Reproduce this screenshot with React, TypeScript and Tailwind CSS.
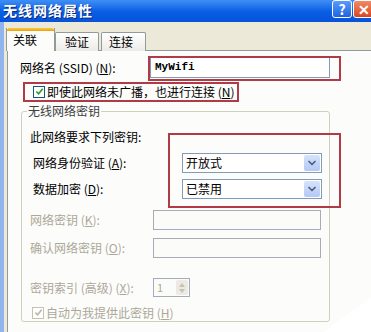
import { ChevronDown } from 'lucide-react'

function Dropdown({ value }: { value: string }) {
  return (
    <div className="flex h-[20px] w-[140px] items-center border border-[#7f9db9] bg-white pl-[3px]">
      <span className="flex-1 text-[12px] leading-none">{value}</span>
      <div className="mr-[1px] flex h-[16px] w-[16px] items-center justify-center rounded-[2px] bg-gradient-to-b from-[#d6e3fb] to-[#b3c8f5]">
        <ChevronDown className="h-[12px] w-[12px] text-[#4d6185]" strokeWidth={3.5} />
      </div>
    </div>
  )
}

function CheckMark({ disabled }: { disabled?: boolean }) {
  return (
    <div
      className={
        disabled
          ? 'flex h-[12px] w-[12px] items-center justify-center border border-[#c4c2b4] bg-white'
          : 'flex h-[12px] w-[12px] items-center justify-center border border-[#1c5180] bg-white'
      }
    >
      <svg viewBox="0 0 10 10" className="h-[9px] w-[9px]">
        <path
          d="M1.5 5 L4 7.5 L8.5 2"
          fill="none"
          stroke={disabled ? '#b8b6a8' : '#21a121'}
          strokeWidth="1.8"
        />
      </svg>
    </div>
  )
}

export default function App() {
  return (
    <div className="relative h-[332px] w-[371px] overflow-hidden bg-[#ece9d8] font-['Noto_Sans_CJK_SC','Noto_Sans',sans-serif] text-[12px] text-black">
      {/* Title bar */}
      <div className="flex h-[22px] items-start justify-between bg-gradient-to-b from-[#3f8ff6] via-[#0a5fe4] to-[#0752d8] pl-[3px]">
        <span className="mt-[2px] text-[14px] font-bold leading-[17px] tracking-[1px] text-white [text-shadow:1px_1px_0_#0a2a80]">
          无线网络属性
        </span>
        <div className="-mr-[3px] flex gap-[1px]">
          <div className="flex h-[18px] w-[20px] items-center justify-center rounded-[3px] border border-white bg-gradient-to-b from-[#5a9bff] to-[#1d62e0] text-[14px] font-bold leading-none text-white">
            ?
          </div>
          <div className="flex h-[18px] w-[21px] items-center justify-center rounded-[3px] border border-white bg-gradient-to-b from-[#f08a66] to-[#d9431c] text-[14px] font-bold leading-none text-white">
            ✕
          </div>
        </div>
      </div>

      <div className="flex h-[310px]">
        {/* window frame */}
        <div className="w-[4px] bg-[#8fb4ee]" />

        <div className="flex-1 pt-[6px]">
          {/* Tabs */}
          <div className="relative z-10 -mb-px flex items-start pl-[2px]">
            <div className="flex h-[23px] w-[49px] flex-col border-x border-[#919b9c] bg-[#fcfcfb]">
              <div className="h-[3px] rounded-t-[2px] bg-gradient-to-b from-[#ffc83c] to-[#e6a20d]" />
              <span className="pl-[6px] pt-[2px] leading-[14px]">关联</span>
            </div>
            <div className="mt-[4px] flex h-[19px] w-[44px] items-center rounded-t-[2px] border border-b-0 border-[#919b9c] bg-gradient-to-b from-white to-[#ecebe6] pl-[9px]">
              验证
            </div>
            <div className="ml-[2px] mt-[4px] flex h-[19px] w-[45px] items-center rounded-t-[2px] border border-b-0 border-[#919b9c] bg-gradient-to-b from-white to-[#ecebe6] pl-[7px]">
              连接
            </div>
          </div>

          {/* Tab panel */}
          <div className="-mr-[10px] ml-[3px] h-[300px] border border-[#919b9c] bg-[#fcfcfb]">
            <div className="mt-[6px] flex h-[21px] items-center">
              <span className="w-[142px] pl-[12px]">
                网络名 (SSID) (<u>N</u>):
              </span>
              <div className="flex h-[21px] w-[180px] items-center border border-[#7f9db9] bg-white pl-[4px] font-['Liberation_Mono',monospace] text-[11px] font-bold">
                MyWifi
              </div>
            </div>

            <div className="mt-[7px] flex h-[13px] items-center gap-[2px] pl-[25px]">
              <CheckMark />
              <span className="leading-none">
                即使此网络未广播，也进行连接 (<u>N</u>)
              </span>
            </div>

            <fieldset className="ml-[13px] mt-[6px] h-[218px] w-[309px] rounded-[3px] border border-[#d0d0bf]">
              <legend className="ml-[5px] px-[1px] leading-[14px] text-[#404040]">无线网络密钥</legend>
              <div className="flex flex-col">
                <span className="mt-[12px] pl-[8px] leading-[14px]">此网络要求下列密钥:</span>

                <div className="mt-[9px] flex items-center">
                  <span className="w-[160px] pl-[11px]">
                    网络身份验证 (<u>A</u>):
                  </span>
                  <Dropdown value="开放式" />
                </div>
                <div className="mt-[6px] flex items-center">
                  <span className="w-[160px] pl-[11px]">
                    数据加密 (<u>D</u>):
                  </span>
                  <Dropdown value="已禁用" />
                </div>

                <div className="mt-[11px] flex items-center text-[#aca899]">
                  <span className="w-[131px] pl-[8px]">
                    网络密钥 (<u>K</u>):
                  </span>
                  <div className="h-[20px] w-[168px] border border-[#a5acb5] bg-[#fbfbf9]" />
                </div>
                <div className="mt-[8px] flex items-center text-[#aca899]">
                  <span className="w-[131px] pl-[8px]">
                    确认网络密钥 (<u>O</u>):
                  </span>
                  <div className="h-[20px] w-[168px] border border-[#a5acb5] bg-[#fbfbf9]" />
                </div>

                <div className="mt-[20px] flex items-center text-[#aca899]">
                  <span className="w-[131px] pl-[8px]">
                    密钥索引 (高级) (<u>X</u>):
                  </span>
                  <div className="flex h-[19px] w-[37px] items-center border border-[#a5acb5] bg-[#fbfbf9] pl-[3px] text-[11px]">
                    <span className="flex-1 leading-none">1</span>
                    <div className="mr-[1px] flex h-[15px] w-[12px] flex-col items-center justify-center gap-[2px] rounded-[2px] bg-[#eceae2]">
                      <svg viewBox="0 0 6 4" className="h-[4px] w-[6px]">
                        <polygon points="0,4 3,0 6,4" fill="#c4c2b4" />
                      </svg>
                      <svg viewBox="0 0 6 4" className="h-[4px] w-[6px]">
                        <polygon points="0,0 6,0 3,4" fill="#c4c2b4" />
                      </svg>
                    </div>
                  </div>
                </div>

                <div className="mt-[9px] flex h-[13px] items-center gap-[2px] pl-[10px] text-[#aca899]">
                  <CheckMark disabled />
                  <span className="leading-none">
                    自动为我提供此密钥 (<u>H</u>)
                  </span>
                </div>
              </div>
            </fieldset>
          </div>
        </div>
      </div>

      {/* red annotation boxes */}
      <div className="absolute left-[148px] top-[56px] h-[25px] w-[193px] border-2 border-[#b03a46]" />
      <div className="absolute left-[23px] top-[82px] h-[20px] w-[216px] border-2 border-[#b03a46]" />
      <div className="absolute left-[168px] top-[133px] h-[75px] w-[173px] border-2 border-[#b03a46]" />

      {/* torn corner */}
      <svg className="absolute left-0 top-0 h-[332px] w-[371px]" viewBox="0 0 371 332">
        <polygon points="372,297 372,333 322,333" fill="#ffffff" />
      </svg>
    </div>
  )
}
